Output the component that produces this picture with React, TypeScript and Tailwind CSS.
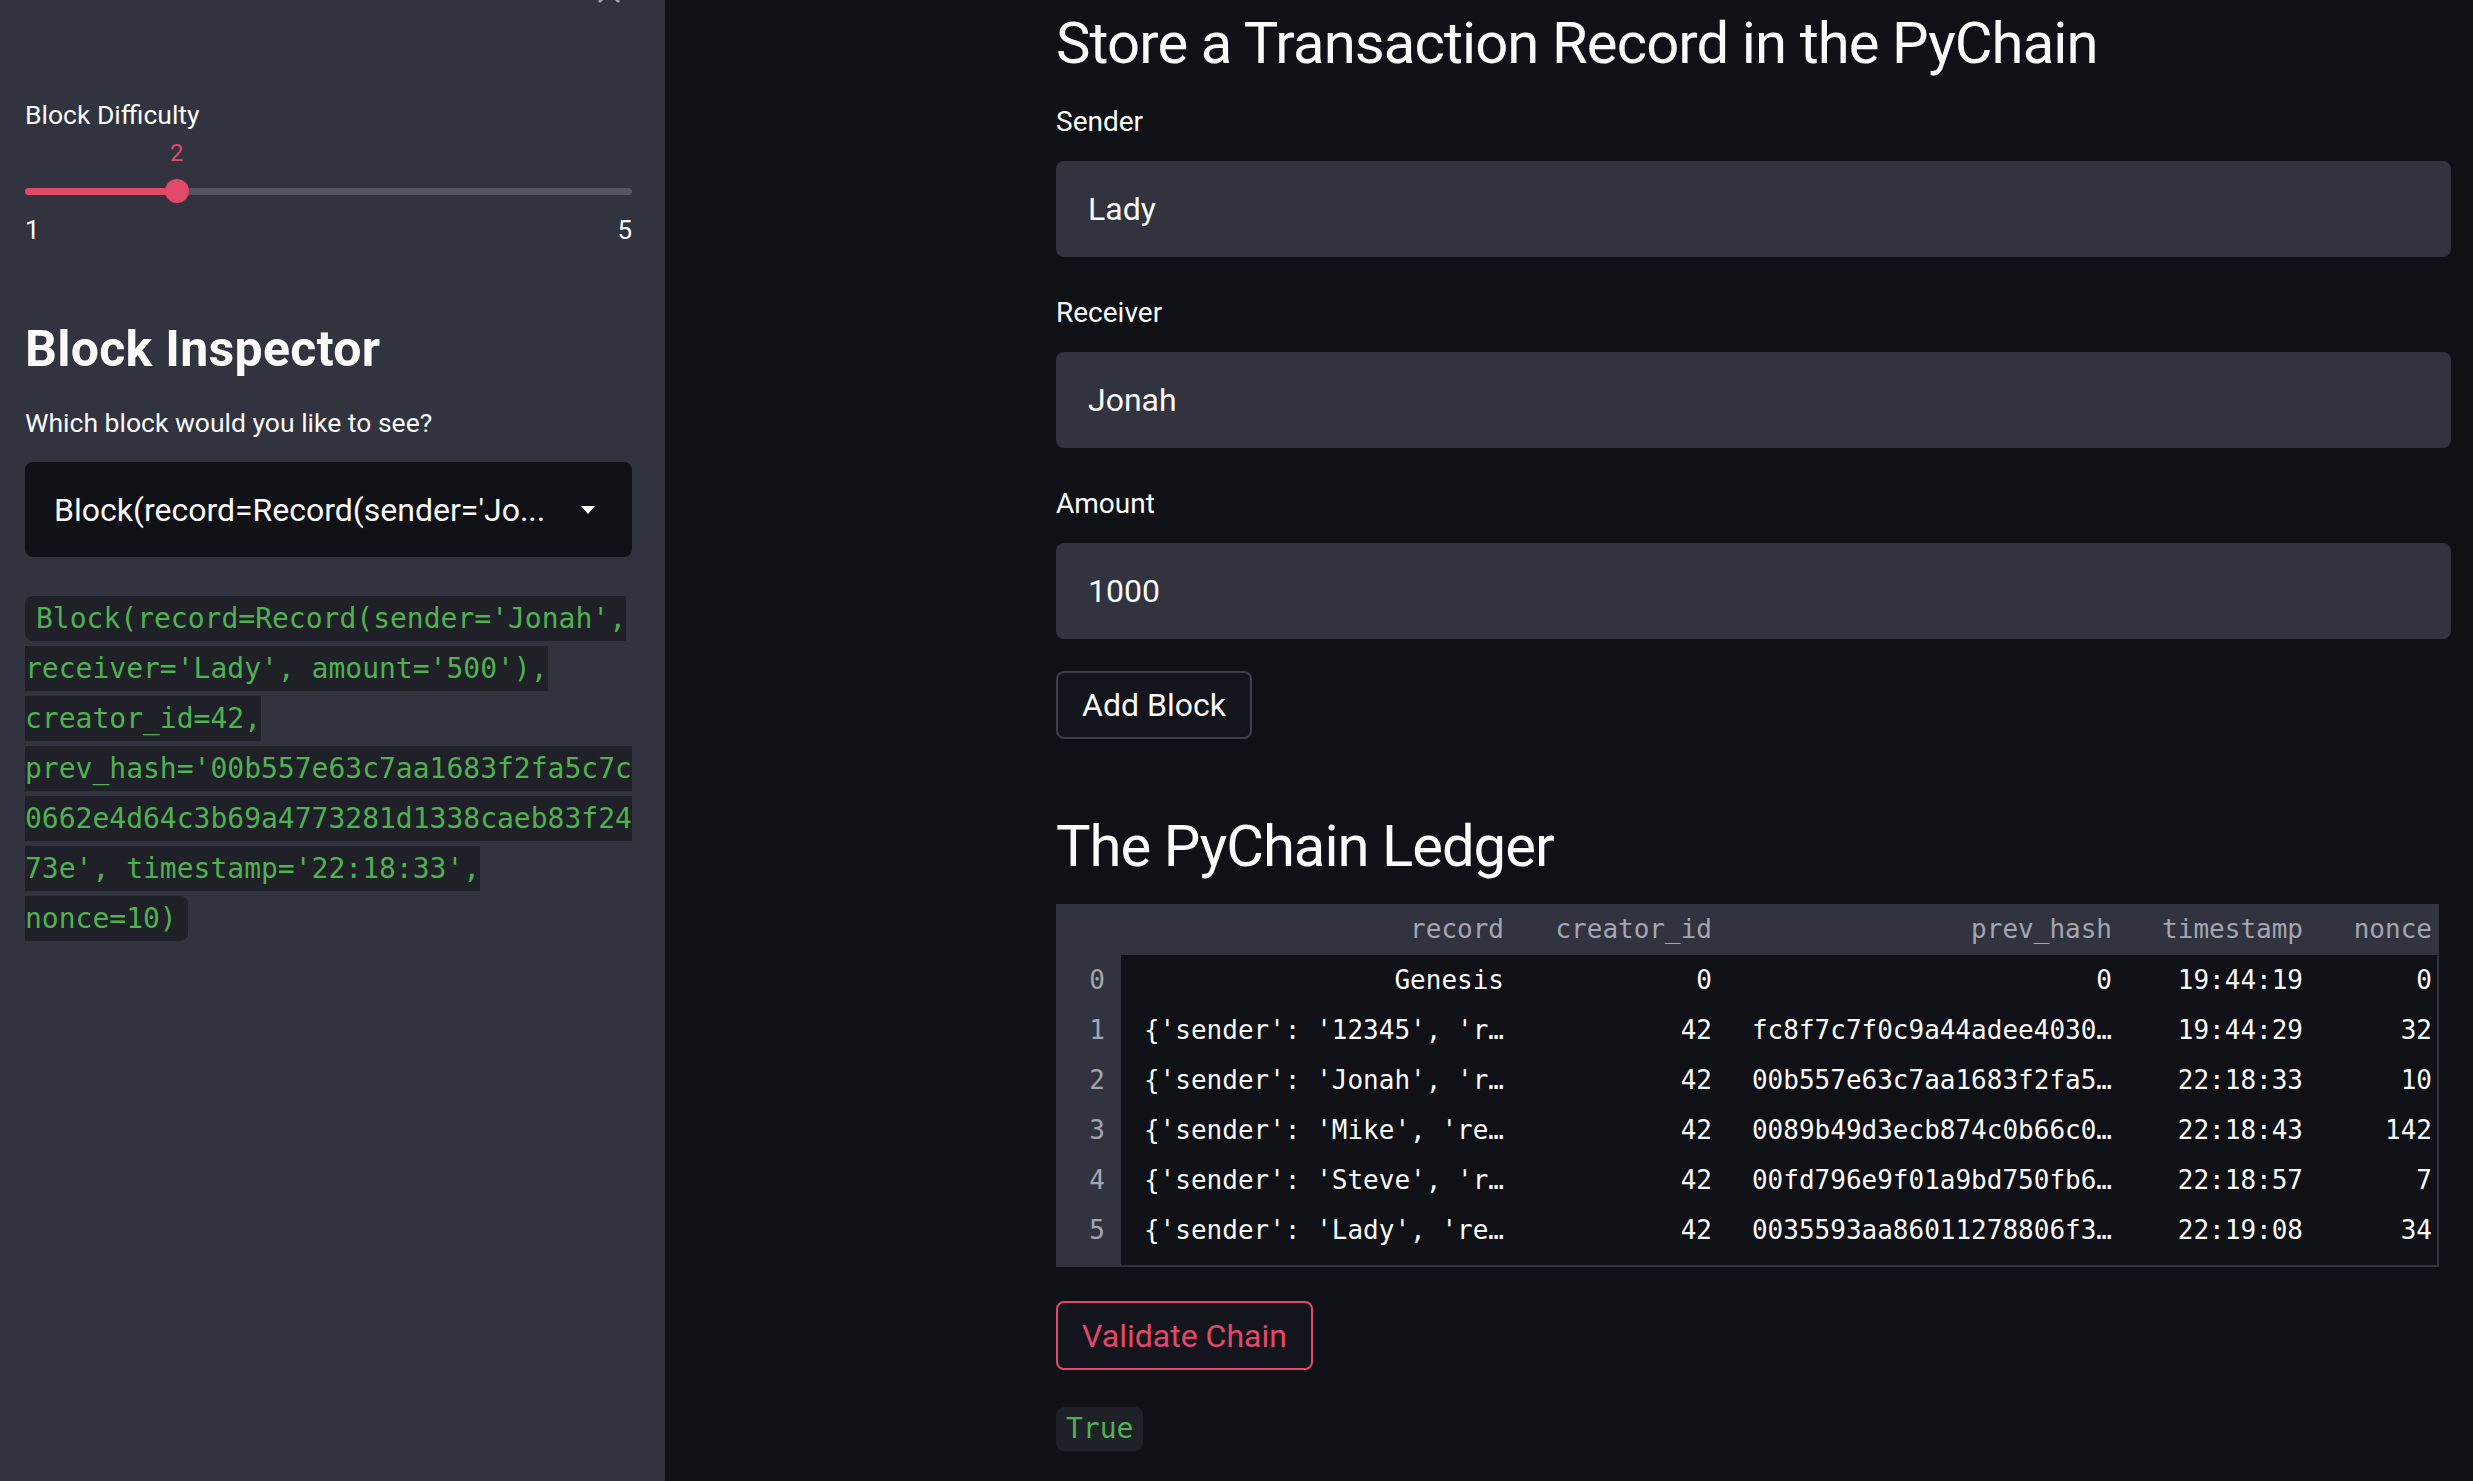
import React from "react";
import { X } from "lucide-react";

const sans = "font-['Roboto','Liberation_Sans',sans-serif]";
const mono = "font-['DejaVu_Sans_Mono','Liberation_Mono',monospace]";

const blockText =
  "Block(record=Record(sender='Jonah', receiver='Lady', amount='500'), creator_id=42, prev_hash='00b557e63c7aa1683f2fa5c7c0662e4d64c3b69a4773281d1338caeb83f2473e', timestamp='22:18:33', nonce=10)";

type Row = {
  record: string;
  creator: string;
  hash: string;
  time: string;
  nonce: string;
};

const rows: Row[] = [
  { record: "Genesis", creator: "0", hash: "0", time: "19:44:19", nonce: "0" },
  { record: "{'sender': '12345', 'r…", creator: "42", hash: "fc8f7c7f0c9a44adee4030…", time: "19:44:29", nonce: "32" },
  { record: "{'sender': 'Jonah', 'r…", creator: "42", hash: "00b557e63c7aa1683f2fa5…", time: "22:18:33", nonce: "10" },
  { record: "{'sender': 'Mike', 're…", creator: "42", hash: "0089b49d3ecb874c0b66c0…", time: "22:18:43", nonce: "142" },
  { record: "{'sender': 'Steve', 'r…", creator: "42", hash: "00fd796e9f01a9bd750fb6…", time: "22:18:57", nonce: "7" },
  { record: "{'sender': 'Lady', 're…", creator: "42", hash: "0035593aa86011278806f3…", time: "22:19:08", nonce: "34" },
];

function Field({ label, value }: { label: string; value: string }) {
  return (
    <div className="flex flex-col">
      <label className="text-[28px] leading-[36px] text-[#fafafa]">{label}</label>
      <div className="mt-[21px] flex h-[96px] items-center rounded-[8px] bg-[#31333f] px-[32px] text-[32px] text-[#fafafa]">
        {value}
      </div>
    </div>
  );
}

function Sidebar() {
  return (
    <aside className="relative w-[665px] shrink-0 bg-[#31333f] pl-[25px] pr-[33px] pt-[97px] text-[#fafafa]">
      <X
        className="absolute left-[591px] top-[-26px] text-[#a3a6b1]"
        size={36}
        strokeWidth={2}
      />
      <div className="text-[26.5px] leading-[36px]">Block Difficulty</div>

      <div className="relative mt-[2px] h-[36px]">
        <span className="absolute left-1/4 -translate-x-1/2 text-[24px] leading-[36px] text-[#e2486a]">
          2
        </span>
      </div>
      <div className="relative mt-[8px] flex h-[24px] items-center">
        <div className="h-[7px] w-full rounded-full bg-[#53555f]" />
        <div className="absolute left-0 h-[7px] w-1/4 rounded-full bg-[#e2486a]" />
        <div className="absolute left-1/4 h-[24px] w-[24px] -translate-x-1/2 rounded-full bg-[#e2486a]" />
      </div>
      <div className="mt-[9px] flex justify-between text-[26px] leading-[36px]">
        <span>1</span>
        <span>5</span>
      </div>

      <h2 className="mt-[71px] text-[50px] font-bold leading-[60px] tracking-[0.3px]">
        Block Inspector
      </h2>
      <div className="mt-[26px] text-[26.5px] leading-[36px]">
        Which block would you like to see?
      </div>

      <div className="mt-[21px] flex h-[95px] items-center justify-between rounded-[8px] bg-[#101117] pl-[29px] pr-[36px] text-[32px]">
        <span>Block(record=Record(sender='Jo...</span>
        <svg width="16" height="10" viewBox="0 0 16 10">
          <path d="M1 1h14L8 9z" fill="#fafafa" />
        </svg>
      </div>

      <div className={`mt-[37px] w-[612px] break-words text-[28px] leading-[50px] ${mono}`}>
        <code className={`rounded-[8px] bg-[#1f2028] px-[11px] py-[6px] text-[28px] text-[#4eb24f] ${mono}`}>
          {blockText}
        </code>
      </div>
    </aside>
  );
}

function Ledger() {
  return (
    <div className={`w-[1383px] bg-[#31333f] pb-[2px] pr-[2px] ${mono} text-[26px]`}>
      <div className="flex h-[51px] items-center text-[#a3a6b1]">
        <div className="w-[65px]" />
        <div className="w-[399px] pr-[16px] text-right">record</div>
        <div className="w-[208px] pr-[16px] text-right">creator_id</div>
        <div className="w-[400px] pr-[16px] text-right">prev_hash</div>
        <div className="w-[191px] pr-[16px] text-right">timestamp</div>
        <div className="w-[118px] pr-[5px] text-right">nonce</div>
      </div>
      <div className="flex">
        <div className="w-[65px] text-[#a3a6b1]">
          {rows.map((_, i) => (
            <div key={i} className="flex h-[50px] items-center justify-end pr-[16px]">
              {i}
            </div>
          ))}
        </div>
        <div className="flex-1 bg-[#101117] pb-[10px] text-[#fafafa]">
          {rows.map((r, i) => (
            <div key={i} className="flex h-[50px] items-center whitespace-pre">
              <div className="w-[399px] pr-[16px] text-right">{r.record}</div>
              <div className="w-[208px] pr-[16px] text-right">{r.creator}</div>
              <div className="w-[400px] pr-[16px] text-right">{r.hash}</div>
              <div className="w-[191px] pr-[16px] text-right">{r.time}</div>
              <div className="w-[118px] pr-[5px] text-right">{r.nonce}</div>
            </div>
          ))}
        </div>
      </div>
    </div>
  );
}

export default function App() {
  return (
    <div className={`flex h-[1481px] w-[2473px] overflow-hidden bg-[#101117] ${sans}`}>
      <Sidebar />
      <main className="flex flex-1 flex-col pl-[391px] pr-[22px] pt-[7px] text-[#fafafa]">
        <h1 className="text-[58px] leading-[72px] tracking-[-0.9px]">
          Store a Transaction Record in the PyChain
        </h1>

        <div className="mt-[25px] flex flex-col gap-[38px]">
          <Field label="Sender" value="Lady" />
          <Field label="Receiver" value="Jonah" />
          <Field label="Amount" value="1000" />
        </div>

        <div className="mt-[32px]">
          <button className="h-[68px] w-[196px] rounded-[8px] border-2 border-[#3d3f4a] bg-[#13151c] text-[32px] text-[#fafafa]">
            Add Block
          </button>
        </div>

        <h2 className="mt-[71px] text-[58px] leading-[72px] tracking-[-1px]">The PyChain Ledger</h2>

        <div className="mt-[22px]">
          <Ledger />
        </div>

        <div className="mt-[34px]">
          <button className="h-[69px] w-[257px] rounded-[8px] border-2 border-[#e2486a] bg-[#13151c] text-[32px] text-[#e2486a]">
            Validate Chain
          </button>
        </div>

        <div className="mt-[37px]">
          <code className={`inline-block rounded-[8px] bg-[#1f2028] px-[10px] py-[4px] text-[28px] leading-[36px] text-[#4eb24f] ${mono}`}>
            True
          </code>
        </div>
      </main>
    </div>
  );
}
